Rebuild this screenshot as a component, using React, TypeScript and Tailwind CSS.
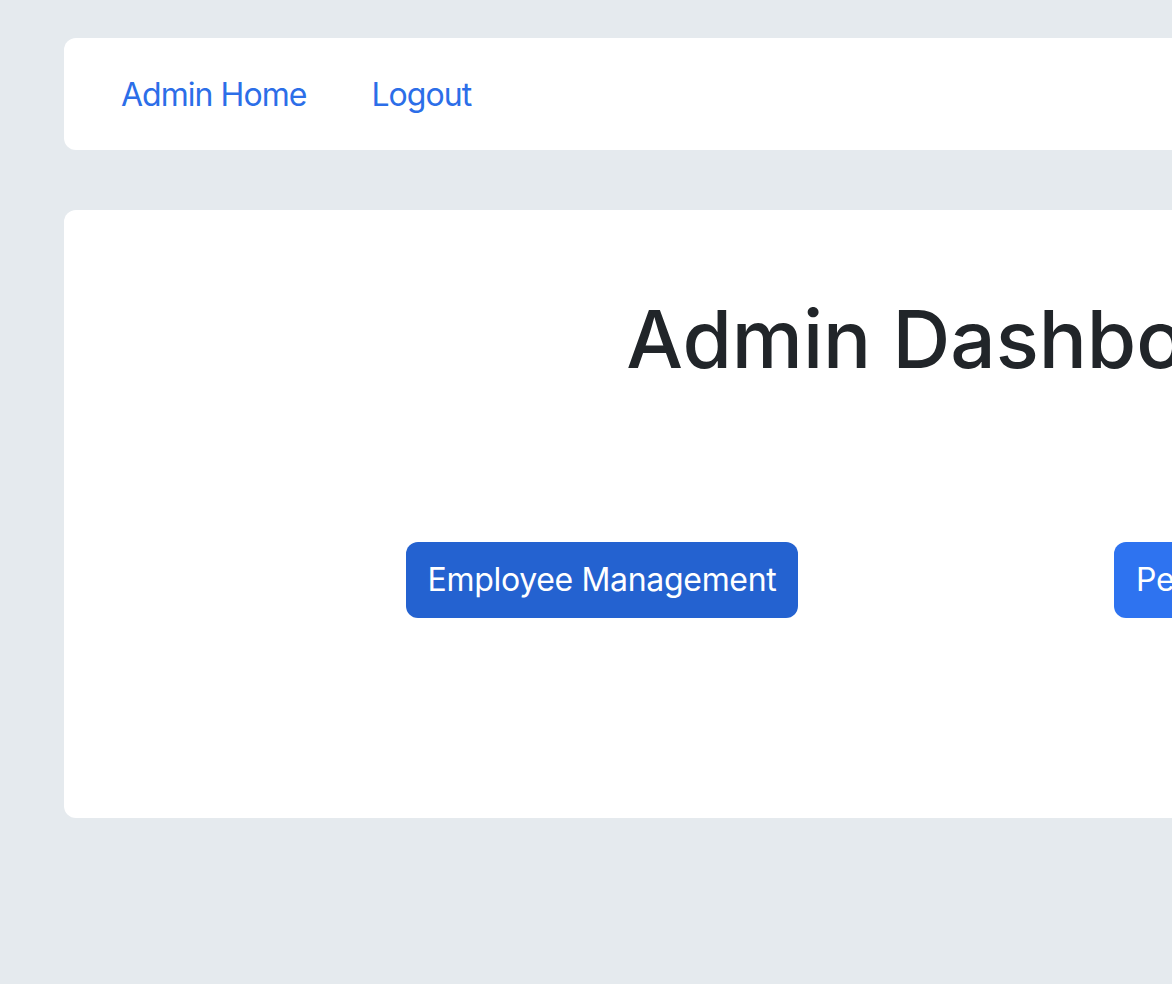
import React from "react";

export default function App() {
  return (
    <div
      className="h-screen w-screen overflow-hidden bg-[#e5eaee] tracking-[-0.02em]"
      style={{ fontFamily: "Inter, 'Noto Sans', sans-serif" }}
    >
      <div className="w-[1936px] pl-[64px] pr-[64px] pt-[38px]">
        <nav className="flex h-[112px] items-center rounded-[12px] bg-white pl-[57px]">
          <ul className="flex items-center gap-[65px] pt-[2px] text-[32px] leading-[48px] tracking-[-0.03em] text-[#2c6ee8]">
            <li>
              <a href="#" className="hover:underline">Admin Home</a>
            </li>
            <li>
              <a href="#" className="hover:underline">Logout</a>
            </li>
          </ul>
        </nav>

        <main className="mt-[60px] h-[608px] rounded-[12px] bg-white px-[172px] pt-[81px]">
          <h1 className="text-center text-[80px] font-medium leading-[96px] tracking-normal text-[#212529]">
            Admin Dashboard
          </h1>
          <div className="mt-[155px] grid grid-cols-2">
            <div className="flex justify-center">
              <button className="h-[76px] rounded-[12px] bg-[#2462d0] px-[22px] text-[32px] leading-[48px] text-white">
                Employee Management
              </button>
            </div>
            <div className="flex justify-center">
              <button className="h-[76px] rounded-[12px] bg-[#2e73f0] px-[22px] text-[32px] leading-[48px] text-white">
                Performance Management
              </button>
            </div>
          </div>
        </main>
      </div>
    </div>
  );
}
